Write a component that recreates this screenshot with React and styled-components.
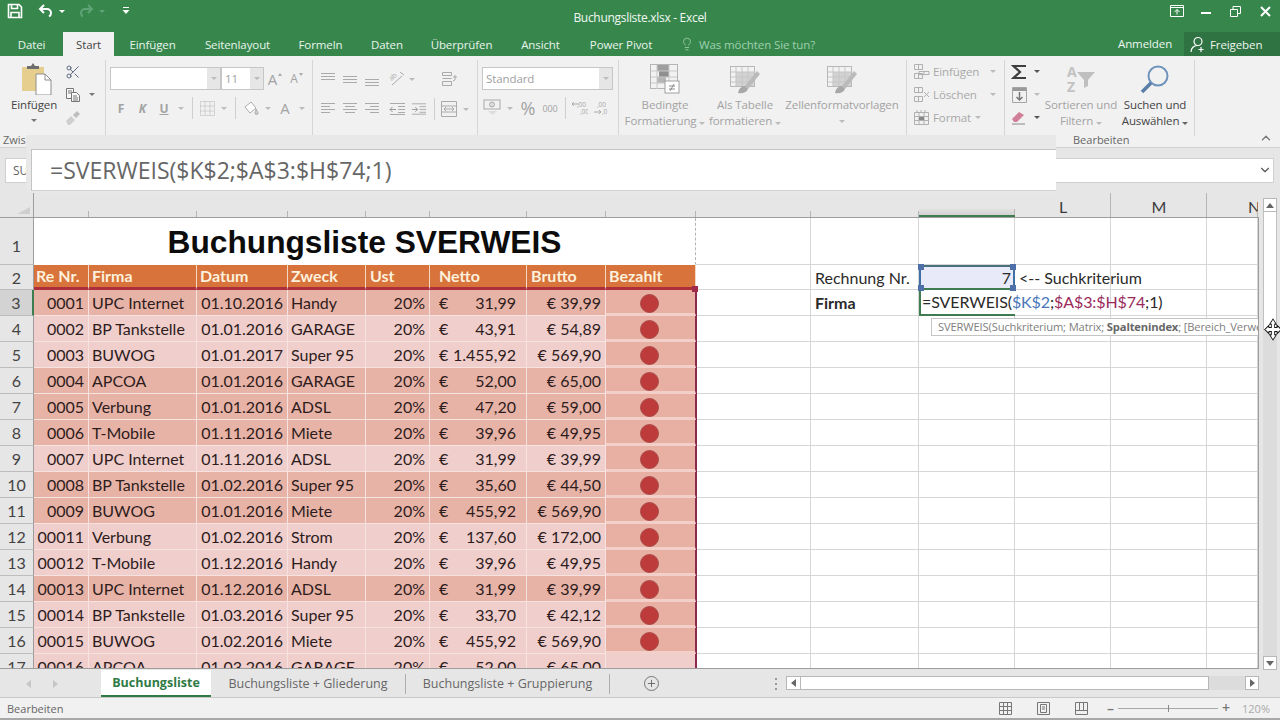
import React from "react";
import styled, { createGlobalStyle } from "styled-components";
import { Scissors, Lightbulb, ChevronDown, ChevronUp, Plus } from "lucide-react";

const Global = createGlobalStyle`
  html, body { margin: 0; padding: 0; width: 1280px; height: 720px; overflow: hidden; background: #e6e6e6; }
  * { box-sizing: border-box; }
  #root { width: 1280px; height: 720px; }
`;

const UI = `"Open Sans", "Noto Sans", sans-serif`;
const GREEN = "#37874d";
const COLS = "34px 55px 108px 91px 78px 64px 97px 79px 90px 115px 108px 96px 96px 96px 51px";

const Page = styled.div`position: relative; width: 1280px; height: 720px; overflow: hidden; display: flex; flex-direction: column; font-family: ${UI}; font-size: 12px; color: #444;`;

const TitleBar = styled.div`height: 32px; flex: none; background: ${GREEN}; display: grid; grid-template-columns: 1fr auto 1fr; align-items: start; color: #fff;`;
const Quick = styled.div`display: flex; align-items: center; height: 22px; padding-left: 7px;`;
const QSlot = styled.div`width: ${p => p.$w}px; display: flex; align-items: center; justify-content: center; height: 22px;`;
const DocTitle = styled.div`font-size: 12px; line-height: 35px; letter-spacing: -0.3px; color: #f2f7f3;`;
const WinBtns = styled.div`display: flex; justify-content: flex-end; align-items: center; height: 22px;`;
const WinBtn = styled.div`width: 29.5px; height: 22px; display: flex; align-items: center; justify-content: center;`;

const TabBar = styled.div`height: 24px; flex: none; background: ${GREEN}; display: flex; color: #e9f3ec;`;
const RTab = styled.div`
  width: ${p => p.$w}px; height: 24px; display: flex; align-items: center; justify-content: center; font-size: 11.5px;
  letter-spacing: -0.1px;
  background: ${p => (p.$active ? "#f1f1f1" : "transparent")}; color: ${p => (p.$active ? "#444" : "#e9f3ec")};
`;
const Tell = styled.div`display: flex; align-items: center; gap: 5px; padding-left: 13px; color: #9fd0ad; font-size: 11.5px; letter-spacing: -0.1px; flex: 1;`;
const Login = styled.div`width: 66px; text-align: left; line-height: 24px; font-size: 11.5px; letter-spacing: -0.1px; color: #eef6f0;`;
const Share = styled.div`width: 96px; height: 24px; background: #2f7342; display: flex; align-items: center; gap: 4px; padding-left: 6px; font-size: 11.5px; letter-spacing: -0.1px; color: #eef6f0;`;

const Ribbon = styled.div`height: 92px; flex: none; background: #f1f1f1; display: flex; border-bottom: 1px solid #d2d2d2; color: #a3a3a3; font-size: 11.5px; letter-spacing: -0.1px;`;
const Group = styled.div`
  width: ${p => p.$w}px; height: 76px; margin-top: 4px; flex: none; border-right: 1px solid #d6d6d6; padding-left: ${p => p.$pl || 0}px;
  display: flex; flex-direction: ${p => (p.$row ? "row" : "column")}; position: relative;
`;
const GroupLabel = styled.div`position: absolute; top: 73px; left: ${p => p.$l}px; font-size: 11px; color: #666; letter-spacing: 0; white-space: nowrap; line-height: 14px;`;
const Collapse = styled.div`flex: 1; display: flex; justify-content: flex-end; align-items: flex-end; padding: 0 7px 2px 0; color: #777;`;
const ToolRow = styled.div`display: flex; align-items: center; height: ${p => p.$h || 24}px; margin-top: ${p => p.$mt || 0}px; padding-left: ${p => p.$pl || 0}px;`;
const Slot = styled.div`width: ${p => p.$w}px; height: 100%; flex: none; display: flex; align-items: center; justify-content: center; font-size: ${p => p.$fs || 12}px; font-weight: ${p => p.$b ? 700 : 400}; color: ${p => p.$c || "#a3a3a3"}; text-decoration: ${p => p.$u ? "underline" : "none"}; font-style: ${p => p.$i ? "italic" : "normal"};`;
const VSep = styled.div`width: 1px; height: 22px; background: #cfcfcf;`;
const Caret = styled.span`display: inline-block; width: 0; height: 0; border-left: 3px solid transparent; border-right: 3px solid transparent; border-top: 3px solid ${p => p.$c || "#bbb"}; margin-left: ${p => p.$ml || 0}px;`;
const SizeMark = styled.span`width: 0; height: 0; margin: -8px 0 0 1px; border-left: 2.5px solid transparent; border-right: 2.5px solid transparent; ${p => p.$up ? "border-bottom: 3px solid #aaa;" : "border-top: 3px solid #aaa;"}`;
const Combo = styled.div`width: ${p => p.$w}px; height: 23px; background: #fff; border: 1px solid #c6c6c6; display: flex; align-items: center; justify-content: space-between; color: #a0a0a0; font-size: 11.5px; padding-left: 3px; flex: none;`;
const ComboArrow = styled.div`width: 13px; height: 21px; background: #e6e6e6; display: flex; align-items: center; justify-content: center;`;
const BigBtn = styled.div`width: ${p => p.$w}px; flex: none; display: flex; flex-direction: column; align-items: center; color: ${p => p.$c || "#a3a3a3"}; line-height: 16px; text-align: center; white-space: nowrap;`;
const BigIcon = styled.div`height: 37px; display: flex; align-items: center; justify-content: center;`;
const SmallCol = styled.div`width: 30px; display: flex; flex-direction: column; align-items: flex-start;`;
const Gap = styled.div`width: ${p => p.$w}px; flex: none;`;
const CellCmd = styled.div`height: 23px; display: flex; align-items: center; gap: 3px; padding-left: 6px; white-space: nowrap; color: #a8a8a8;`;

const FormulaRow = styled.div`height: 42px; flex: none; background: #e6e6e6; display: flex; align-items: center; padding: 2px 6px 0 5px; gap: 8px;`;
const NameBox = styled.div`width: 60px; height: 25px; background: #fff; border: 1px solid #d0d0d0; padding-left: 7px; line-height: 23px; color: #666;`;
const FormulaInput = styled.div`flex: 1; height: 25px; background: #fff; border: 1px solid #d0d0d0; display: flex; justify-content: flex-end; align-items: center; padding-right: 1px; color: #555;`;

const ZoomPanel = styled.div`position: absolute; left: 26px; top: 135px; width: 1030px; height: 58px; background: #e8e8e8; padding: 14px 0 2px 5px; z-index: 8;`;
const ZoomBox = styled.div`height: 42px; background: #fff; border-top: 1px solid #c4c4c4; border-left: 1px solid #c4c4c4; border-bottom: 1px solid #d0d0d0; padding-left: 18px; line-height: 40px; font-size: 23px; color: #666; white-space: nowrap; font-family: "Open Sans", sans-serif;`;

const Main = styled.div`height: 480px; flex: none; display: flex; background: #e6e6e6;`;
const Sheet = styled.div`width: 1259px; flex: none; display: flex; flex-direction: column;`;
const ColHeader = styled.div`height: 28px; flex: none; display: grid; grid-template-columns: ${COLS}; border-bottom: 1px solid #9d9d9d; background: #e6e6e6;`;
const Corner = styled.div`position: relative; border-right: 1px solid #9d9d9d;
  &::after { content: ""; position: absolute; right: 3px; bottom: 3px; width: 0; height: 0; border-left: 13px solid transparent; border-bottom: 7px solid #cfcfcf; }`;
const ColCell = styled.div`
  position: relative; font-family: Lato, sans-serif; font-size: 16px; color: #3c3c3c; text-align: ${p => p.$clip ? "left" : "center"}; line-height: 34px; overflow: hidden;
  padding-left: ${p => p.$clip ? 41 : 0}px;
  background: ${p => p.$sel ? "linear-gradient(#e6e6e6 70%, #d2d2d2)" : "none"};
  border-bottom: ${p => p.$sel ? "2px solid #3f7c50" : "none"};
  &::after { content: ""; position: absolute; right: 0; bottom: 0; width: 1px; height: ${p => p.$tall ? 24 : 6}px; background: #b5b5b5; }
`;
const Grid = styled.div`height: 451px; overflow: hidden; background: #fff; border-bottom: 1px solid #9d9d9d; border-right: 1px solid #9d9d9d; display: flex; flex-direction: column;`;
const Row = styled.div`display: grid; grid-template-columns: ${COLS}; height: ${p => p.$h}px; flex: none; font-family: Lato, sans-serif; font-size: 16px; color: #2e1c1c;`;
const RowNum = styled.div`
  background: ${p => p.$sel ? "#d3d3d3" : "#e6e6e6"}; border-right: ${p => p.$sel ? "2px solid #3f7c50" : "1px solid #9d9d9d"}; border-bottom: 1px solid #bdbdbd;
  display: flex; align-items: center; justify-content: center; padding-top: ${p => p.$low ? 8 : 0}px; color: #444;
`;
const Blank = styled.div`border-right: 1px solid #d6d6d6; border-bottom: 1px solid #d6d6d6; white-space: nowrap; display: flex; align-items: center; padding-left: 4px; font-weight: ${p => p.$b ? 700 : 400}; color: #2a2a2a; min-width: 0;`;
const TitleCell = styled.div`grid-column: span 8; border-right: 1px dashed #b4b4b4; border-bottom: 1px solid #fff; display: flex; align-items: center; justify-content: center; font-family: "Liberation Sans", Arial, sans-serif; font-weight: 700; font-size: 31.7px; color: #0c0c0c; padding-top: 3px;`;
const HeadCell = styled.div`background: #d8743b; border-right: 1px solid #f2d9c4; border-bottom: 3px solid #ae2f3c; color: #fdf0dc; font-weight: 700; display: flex; align-items: center; padding: 0 0 1px ${p => p.$pl}px; position: relative;`;
const Data = styled.div`
  background: ${p => p.$dark ? "#e7b3a7" : "#efcecc"}; border-right: 1px solid #f6e2df; border-bottom: 1px solid #f6e2df;
  display: flex; align-items: center; white-space: nowrap;
  justify-content: ${p => p.$align || "flex-start"}; padding: 0 ${p => p.$pr ?? 4}px 0 ${p => p.$pl ?? 3}px;
`;
const PaidCell = styled.div`position: relative; background: ${p => p.$dark ? "#e8b0a2" : "#efcecc"}; border-bottom: ${p => p.$dark ? "3px solid #f3cfc9" : "none"}; border-right: 1px solid #8a2a4c; box-shadow: 1px 0 0 #8a2a4c; display: flex; align-items: center; justify-content: center; padding-right: 2px;`;
const Dot = styled.div`width: 19px; height: 19px; border-radius: 50%; background: #bd3b3b; border: 1px solid #ab4a48; margin-top: 3px;`;
const Handle = styled.div`position: absolute; width: 6px; height: 6px; background: ${p => p.$c}; z-index: 4; ${p => p.$pos}`;
const CritCell = styled.div`position: relative; background: #e9eaf9; border: 2px solid #3f6fa5; border-top-color: #47707a; border-bottom-color: #3f7c50; text-align: right; padding-right: 2px; line-height: 21px; color: #2a2a2a;`;
const FormulaCell = styled.div`position: relative; z-index: 3; border-left: 2px solid #3f7c50; border-bottom: 2px solid #3f7c50; white-space: nowrap; padding-left: 1px; line-height: 24px; color: #2a2a2a; letter-spacing: -0.1px;`;
const Ref = styled.span`color: ${p => p.$c};`;
const Tip = styled.div`position: absolute; left: 10px; top: 28px; width: 331px; height: 18px; background: #fff; border: 1px solid #c4c4c4; font-family: ${UI}; font-size: 11.2px; letter-spacing: -0.15px; color: #808080; line-height: 16px; padding-left: 6px; white-space: nowrap; overflow: hidden;
  b { color: #666; font-weight: 700; }`;
const Cursor = styled.svg`position: absolute; left: 1264px; top: 318px; z-index: 9;`;

const VScroll = styled.div`flex: 1; display: flex; flex-direction: column; padding: 8px 3px 0 4px; height: 480px;`;
const SBtn = styled.div`width: ${p => p.$w || 14}px; height: 14px; flex: none; background: #fff; border: 1px solid #b8b8b8; display: flex; align-items: center; justify-content: center;`;
const VThumb = styled.div`height: 118px; flex: none; background: #fff; border: 1px solid #c0c0c0; border-top: none;`;
const VTrack = styled.div`flex: 1; background: #dcdcdc;`;
const Arrow = styled.span`display: inline-block; width: 0; height: 0; opacity: ${p => p.$dim ? 0.25 : 1};
  ${p => p.$d === "up" && "border-left:4px solid transparent;border-right:4px solid transparent;border-bottom:5px solid #666;"}
  ${p => p.$d === "down" && "border-left:4px solid transparent;border-right:4px solid transparent;border-top:5px solid #666;"}
  ${p => p.$d === "left" && "border-top:4px solid transparent;border-bottom:4px solid transparent;border-right:5px solid #666;"}
  ${p => p.$d === "right" && "border-top:4px solid transparent;border-bottom:4px solid transparent;border-left:5px solid #666;"}
`;

const SheetTabs = styled.div`height: 27px; flex: none; background: #e6e6e6; display: flex; align-items: center; position: relative;`;
const TabNav = styled.div`width: 101px; height: 100%; display: flex; align-items: center; padding-left: 26px; gap: 22px;`;
const STab = styled.div`
  width: ${p => p.$w}px; display: flex; align-items: center; justify-content: center; flex: none; font-size: 12.5px;
  color: ${p => p.$active ? "#2f7a45" : "#666"}; font-weight: ${p => p.$active ? 700 : 400}; background: ${p => p.$active ? "#fff" : "transparent"};
  border-bottom: ${p => p.$active ? "2px solid #2f7a45" : "none"}; margin-top: ${p => p.$active ? -1 : 0}px;
  border-right: ${p => p.$sep ? "1px solid #aeaeae" : "none"}; height: ${p => p.$active ? 27 : 20}px;
`;
const AddTab = styled.div`width: 15px; height: 15px; border-radius: 50%; border: 1px solid #777; margin-left: 34px; display: flex; align-items: center; justify-content: center; color: #666;`;
const Dots = styled.div`width: 2px; height: 12px; margin-left: 116px; background: repeating-linear-gradient(#999 0 2px, transparent 2px 5px);`;
const HScroll = styled.div`margin-left: 9px; width: 473px; height: 15px; display: flex;`;
const HThumb = styled.div`width: 408px; height: 14px; background: #fff; border: 1px solid #b8b8b8; border-left: none;`;
const HTrack = styled.div`flex: 1; height: 14px; background: #dcdcdc;`;

const Status = styled.div`flex: 1; background: #f1f1f1; border-top: 1px solid #c8c8c8; border-bottom: 2px solid #a8a8a8; display: flex; align-items: center; justify-content: space-between; padding: 0 10px 0 7px; font-size: 11px; color: #666;`;
const StatusRight = styled.div`display: flex; align-items: center;`;
const ViewBtn = styled.div`width: 38px; display: flex; justify-content: center; align-items: center;`;
const ZoomSlider = styled.div`width: 100px; height: 1px; background: #a8a8a8; margin: 0 4px; position: relative;
  &::after { content: ""; position: absolute; left: 50px; top: -3px; width: 1px; height: 7px; background: #888; }`;
const ZoomPct = styled.div`margin-left: 12px; color: #aaa;`;
const SignBtn = styled.div`color: #777; font-size: 14px; line-height: 14px; font-weight: 600; margin-left: ${p => p.$ml || 0}px;`;

/* drawings */
const SaveIcon = () => (
  <svg width="16" height="16" viewBox="0 0 16 16" fill="none" stroke="#fff" strokeWidth="1.6">
    <path d="M1.500 1.500h10.500l2.500 2.500v10.500h-13z" /><path d="M4.500 1.500v4h6v-4M4 14.500v-5h8v5" />
  </svg>
);
const UndoIcon = () => (
  <svg width="16" height="14" viewBox="0 0 16 14" fill="none" stroke="#fff" strokeWidth="2">
    <path d="M6 1L2 5l4 4" /><path d="M2 5h7a4 4 0 0 1 4 4 4 4 0 0 1-2 3.500" />
  </svg>
);
const RedoIcon = () => (
  <svg width="16" height="14" viewBox="0 0 16 14" fill="none" stroke="#5ea476" strokeWidth="2">
    <path d="M10 1l4 4-4 4" /><path d="M14 5H7a4 4 0 0 0-4 4 4 4 0 0 0 2 3.500" />
  </svg>
);
const QatMore = () => (
  <svg width="8" height="8" viewBox="0 0 8 8" fill="#fff"><rect x="1" y="0" width="6" height="1" /><path d="M.5 3h7L4 7z" /></svg>
);
const Paste = () => (
  <svg width="30" height="32" viewBox="0 0 30 32" style={{ marginLeft: 5 }}>
    <rect x="0" y="4" width="22" height="24" fill="#e6cf8e" />
    <path d="M5 6V3h4l2-3 2 3h4v3z" fill="#6d6d6d" />
    <path d="M14 11h9l6 6v15H14z" fill="#fff" stroke="#8e8e8e" />
    <path d="M23 11v6h6" fill="none" stroke="#8e8e8e" />
  </svg>
);
const CopyIcon = () => (
  <svg width="16" height="16" viewBox="0 0 16 16" fill="#f8f8f8" stroke="#777">
    <path d="M1.500 1.500h7v10h-7z" /><path d="M6.500 5.500h5l3 3v6h-8z" /><path d="M3 4h4M3 6h3M8 9h4M8 11h5M8 13h5" fill="none" />
  </svg>
);
const Brush = () => (
  <svg width="16" height="15" viewBox="0 0 16 15">
    <path d="M1 11l5-5 4 4-5 5H3z" fill="#cfcfcf" /><path d="M8 5l4-4 3 3-4 4z" fill="#bdbdbd" />
  </svg>
);
const Lines = ({ rows }) => (
  <svg width="17" height="14" viewBox="0 0 17 14" stroke="#aaa" strokeWidth="1">
    {rows.map(([x1, x2, y], i) => <line key={i} x1={x1} x2={x2} y1={y + 0.5} y2={y + 0.5} />)}
  </svg>
);
const Indent = ({ dir }) => (
  <svg width="17" height="14" viewBox="0 0 17 14" stroke="#aaa" fill="none">
    <path d="M1 1.500h15M9 4.500h7M9 7.500h7M9 10.500h7M1 12.500h15" />
    {dir === "out" ? <path d="M7 7.500H1m2.500-2.500L1 7.500 3.500 10" stroke="#999" /> : <path d="M1 7.500h6M4.500 5L7 7.500 4.500 10" stroke="#999" />}
  </svg>
);
const Angle = () => (
  <svg width="18" height="16" viewBox="0 0 18 16" fill="none" stroke="#aaa"><path d="M5 14l10-9M13 1l4 3" /><text x="2" y="8" fontSize="7" fill="#aaa" stroke="none" transform="rotate(-40 6 6)" fontFamily="Open Sans">ab</text></svg>
);
const Wrap = () => (
  <svg width="17" height="17" viewBox="0 0 17 17" fill="none" stroke="#aaa"><path d="M1.500 1.500h9v3h-9zM1.500 7.500h9M1.500 10.500h9v4h-9zM12 6h4M14 4v5l-2 1" /></svg>
);
const Merge = () => (
  <svg width="16" height="16" viewBox="0 0 16 16" fill="none" stroke="#aaa"><path d="M.5.500h15v15H.5zM.5 5h15M.5 11h15M3 8h10M3 8l2-2M3 8l2 2M13 8l-2-2M13 8l-2 2" /></svg>
);
const Borders = () => (
  <svg width="15" height="15" viewBox="0 0 15 15" fill="none" stroke="#b5b5b5" strokeDasharray="1 1"><path d="M.5.500h14v14H.5zM5 .5v14M10 .5v14M.5 5h14M.5 10h14" /></svg>
);
const Fill = () => (
  <svg width="18" height="16" viewBox="0 0 18 16" fill="#fff" stroke="#aaa"><path d="M3 7l6-5 5 6-6 5z" /><path d="M14 9c1 2 2 3 2 4a1 1 0 0 1-3 0c0-1 1-2 1-4z" fill="#ccc" /></svg>
);
const Money = () => (
  <svg width="18" height="18" viewBox="0 0 18 18" fill="none" stroke="#aaa"><rect x="1" y="1" width="16" height="9" /><circle cx="9" cy="5.500" r="2.500" fill="#ddd" /><path d="M5 12h9l-4.500 4z" fill="#ddd" stroke="none" /></svg>
);
const Dec = ({ flip }) => (
  <svg width="18" height="16" viewBox="0 0 18 16" fill="none" stroke="#aaa">
    <path d={flip ? "M2 12h7M7 10l2 2-2 2" : "M9 4H2m2-2L2 4l2 2"} />
    <text x={flip ? 5 : 7} y="7" fontSize="6.500" fill="#aaa" stroke="none" fontFamily="Open Sans">,00</text>
    <text x="10" y="14" fontSize="6.500" fill="#aaa" stroke="none" fontFamily="Open Sans">{flip ? ",0" : ",00"}</text>
  </svg>
);
const CondFmt = () => (
  <svg width="30" height="30" viewBox="0 0 30 30">
    <rect x=".5" y=".5" width="27" height="24" fill="#f2f2f2" stroke="#b5b5b5" />
    <rect x="7" y="1" width="12" height="6" fill="#9e9e9e" /><rect x="9" y="7" width="10" height="6" fill="#8f8f8f" /><rect x="7" y="13" width="9" height="6" fill="#b5b5b5" />
    <path d="M7 1v24M19 1v24M1 7h26M1 13h26M1 19h26" stroke="#c8c8c8" fill="none" />
    <rect x="15" y="17" width="14" height="12" fill="#fff" stroke="#a0a0a0" />
    <path d="M19 22h6M19 25h6M24 20l-4 7" stroke="#8a8a8a" fill="none" />
  </svg>
);
const TableFmt = () => (
  <svg width="30" height="30" viewBox="0 0 30 30">
    <rect x=".5" y="2.500" width="24" height="20" fill="#f2f2f2" stroke="#b8b8b8" />
    <rect x="6" y="8" width="18" height="14" fill="#d2d2d2" />
    <path d="M6 3v19M12 3v19M18 3v19M1 8h24M1 13h24M1 18h24" stroke="#c6c6c6" fill="none" />
    <path d="M15 22l12-15 3 3-12 15z" fill="#bababa" /><path d="M8 29c1-5 4-7 7-7l3 3c-1 3-5 5-10 4z" fill="#a8a8a8" />
  </svg>
);
const CellIns = ({ kind }) => (
  <svg width="17" height="17" viewBox="0 0 17 17" fill="none" stroke="#b0b0b0">
    <path d="M1.500 1.500h8v5h-8zM1.500 10.500h8v5h-8zM5.500 1.500v5M5.500 10.500v5" />
    {kind === "ins" && <path d="M6 8.500h10v3H6zM11 8.500v3" />}
    {kind === "del" && <path d="M11 6l5 5M16 6l-5 5" />}
  </svg>
);
const CellFmt = () => (
  <svg width="17" height="17" viewBox="0 0 17 17" fill="none" stroke="#b0b0b0">
    <path d="M1.500 3.500h14v12h-14zM1.500 7.500h14M1.500 11.500h14M6 3.500v12M11 3.500v12M4 1v3M8 1v3M12 1v3" /><rect x="6" y="8" width="5" height="3" fill="#888" stroke="none" />
  </svg>
);
const Sigma = () => (
  <svg width="16" height="16" viewBox="0 0 16 16" fill="none" stroke="#3f3f3f" strokeWidth="2.200"><path d="M15 2H2.500L9 8l-6.500 6H15" /></svg>
);
const FillDown = () => (
  <svg width="15" height="16" viewBox="0 0 15 16" fill="none" stroke="#a5a5a5"><path d="M.5.500h14v15H.5z" /><rect x="1" y="1" width="13" height="3" fill="#999" stroke="none" /><path d="M7.500 5v8M4.500 10l3 3 3-3" stroke="#777" strokeWidth="1.500" /></svg>
);
const Eraser = () => (
  <svg width="16" height="15" viewBox="0 0 16 15"><path d="M1 9l7-7 5 3-7 7H3z" fill="#cf7f98" /><path d="M1 14h13" stroke="#888" /></svg>
);
const SortIcon = () => (
  <svg width="30" height="30" viewBox="0 0 30 30">
    <text x="1" y="13" fontSize="14" fontWeight="700" fill="#c2c2c2" fontFamily="Open Sans">A</text>
    <text x="1" y="28" fontSize="14" fontWeight="700" fill="#c2c2c2" fontFamily="Open Sans">Z</text>
    <path d="M11 8h18l-7 8v6l-4 2v-8z" fill="#bfbfbf" />
  </svg>
);
const SearchBig = () => (
  <svg width="30" height="30" viewBox="0 0 30 30" fill="none">
    <circle cx="18" cy="12" r="9.500" stroke="#6f93bb" strokeWidth="2" />
    <path d="M11 19L2 28" stroke="#5b7ea8" strokeWidth="3.500" />
  </svg>
);
const ShareIcon = () => (
  <svg width="16" height="17" viewBox="0 0 16 17" fill="none" stroke="#fff" strokeWidth="1.200">
    <circle cx="8" cy="5.500" r="4" /><path d="M1 16c0-4 3-6.500 6-6.500M11 11v5M8.500 13.500h5" />
  </svg>
);
const RestoreRibbon = () => (
  <svg width="14" height="12" viewBox="0 0 14 12" fill="none" stroke="#fff"><path d="M.5.500h13v11H.5zM.5 2.500h13" /><path d="M7 9.500V4.500M4.500 7L7 4.500 9.500 7" /></svg>
);
const GridView = () => (
  <svg width="13" height="13" viewBox="0 0 13 13" fill="none" stroke="#777"><path d="M.5.500h12v12H.5zM4.500.500v12M8.500.500v12M.5 4.500h12M.5 8.500h12" /></svg>
);
const PageView = () => (
  <svg width="13" height="13" viewBox="0 0 13 13" fill="none" stroke="#777"><path d="M.5.500h12v12H.5zM3.500 2.500h6v8h-6zM5 5h3M5 7h3" /></svg>
);
const BreakView = () => (
  <svg width="13" height="13" viewBox="0 0 13 13" fill="none" stroke="#777"><path d="M.5.500h12v12H.5zM.5 8.500h12M4.500.500v8M8.500.500v8" /></svg>
);
const MoveCursor = () => (
  <Cursor width="18" height="23" viewBox="0 0 22 22" preserveAspectRatio="none">
    <path d="M11 1l4 5h-2v3h3V7l5 4-5 4v-2h-3v3h2l-4 5-4-5h2v-3H6v2l-5-4 5-4v2h3V6H7z" fill="#fff" stroke="#111" strokeWidth="1" />
  </Cursor>
);

const DATA = [
  ["0001", "UPC Internet", "01.10.2016", "Handy", "31,99", "€ 39,99", 1],
  ["0002", "BP Tankstelle", "01.01.2016", "GARAGE", "43,91", "€ 54,89", 0],
  ["0003", "BUWOG", "01.01.2017", "Super 95", "1.455,92", "€ 569,90", 0],
  ["0004", "APCOA", "01.01.2016", "GARAGE", "52,00", "€ 65,00", 1],
  ["0005", "Verbung", "01.01.2016", "ADSL", "47,20", "€ 59,00", 1],
  ["0006", "T-Mobile", "01.11.2016", "Miete", "39,96", "€ 49,95", 1],
  ["0007", "UPC Internet", "01.11.2016", "ADSL", "31,99", "€ 39,99", 0],
  ["0008", "BP Tankstelle", "01.02.2016", "Super 95", "35,60", "€ 44,50", 1],
  ["0009", "BUWOG", "01.01.2016", "Miete", "455,92", "€ 569,90", 1],
  ["00011", "Verbung", "01.02.2016", "Strom", "137,60", "€ 172,00", 0],
  ["00012", "T-Mobile", "01.12.2016", "Handy", "39,96", "€ 49,95", 0],
  ["00013", "UPC Internet", "01.12.2016", "ADSL", "31,99", "€ 39,99", 1],
  ["00014", "BP Tankstelle", "01.03.2016", "Super 95", "33,70", "€ 42,12", 0],
  ["00015", "BUWOG", "01.02.2016", "Miete", "455,92", "€ 569,90", 0],
  ["00016", "APCOA", "01.03.2016", "GARAGE", "52,00", "€ 65,00", 0],
];

const HEADERS = [["Re Nr.", 2], ["Firma", 3], ["Datum", 3], ["Zweck", 3], ["Ust", 4], ["Netto", 9], ["Brutto", 4], ["Bezahlt", 3]];

const BlankCells = ({ n }) => Array.from({ length: n }, (_, i) => <Blank key={i} />);

export default function App() {
  return (
    <Page>
      <Global />
      <TitleBar>
        <Quick>
          <QSlot $w={16}><SaveIcon /></QSlot>
          <QSlot $w={14} />
          <QSlot $w={18}><UndoIcon /></QSlot>
          <QSlot $w={14}><Caret $c="#fff" /></QSlot>
          <QSlot $w={8} />
          <QSlot $w={18}><RedoIcon /></QSlot>
          <QSlot $w={14}><Caret $c="#5ea476" /></QSlot>
          <QSlot $w={12} />
          <QSlot $w={10}><QatMore /></QSlot>
        </Quick>
        <DocTitle>Buchungsliste.xlsx - Excel</DocTitle>
        <WinBtns>
          <WinBtn><RestoreRibbon /></WinBtn>
          <WinBtn><svg width="10" height="10" viewBox="0 0 10 10"><rect x="0" y="6" width="10" height="2" fill="#fff" /></svg></WinBtn>
          <WinBtn><svg width="11" height="11" viewBox="0 0 11 11" fill="none" stroke="#fff"><path d="M.5 3.500h7v7h-7zM3 3.500v-3h7.500v7h-3" /></svg></WinBtn>
          <WinBtn><svg width="11" height="11" viewBox="0 0 11 11" stroke="#fff" strokeWidth="2"><path d="M1 1l9 9M10 1l-9 9" /></svg></WinBtn>
        </WinBtns>
      </TitleBar>

      <TabBar>
        <RTab $w={63}>Datei</RTab>
        <RTab $w={51} $active>Start</RTab>
        <RTab $w={77}>Einfügen</RTab>
        <RTab $w={93}>Seitenlayout</RTab>
        <RTab $w={73}>Formeln</RTab>
        <RTab $w={60}>Daten</RTab>
        <RTab $w={89}>Überprüfen</RTab>
        <RTab $w={69}>Ansicht</RTab>
        <RTab $w={92}>Power Pivot</RTab>
        <Tell><Lightbulb size={14} strokeWidth={1.4} />Was möchten Sie tun?</Tell>
        <Login>Anmelden</Login>
        <Share><ShareIcon />Freigeben</Share>
      </TabBar>

      <Ribbon>
        <Group $w={106} $pl={3} $row>
          <BigBtn $w={62} $c="#444">
            <BigIcon><Paste /></BigIcon>
            <span>Einfügen</span>
            <ToolRow $h={14}><Caret $c="#777" /></ToolRow>
          </BigBtn>
          <SmallCol>
            <ToolRow $h={23}><Scissors size={16} color="#55617a" strokeWidth={1.4} /></ToolRow>
            <ToolRow $h={23}><CopyIcon /><Caret $c="#777" $ml={8} /></ToolRow>
            <ToolRow $h={23}><Brush /></ToolRow>
          </SmallCol>
          <GroupLabel $l={3}>Zwischenablage</GroupLabel>
        </Group>

        <Group $w={207}>
          <ToolRow $h={23} $mt={7} $pl={4}>
            <Combo $w={111}><span /><ComboArrow><Caret /></ComboArrow></Combo>
            <Combo $w={43}>11<ComboArrow><Caret /></ComboArrow></Combo>
            <Slot $w={22} $fs={15}>A<SizeMark $up /></Slot>
            <Slot $w={21} $fs={12}>A<SizeMark /></Slot>
          </ToolRow>
          <ToolRow $h={24} $mt={6} $pl={4}>
            <Slot $w={22} $b>F</Slot>
            <Slot $w={21} $b $i>K</Slot>
            <Slot $w={22} $b $u>U</Slot>
            <Slot $w={12}><Caret /></Slot>
            <Slot $w={10}><VSep /></Slot>
            <Slot $w={20}><Borders /></Slot>
            <Slot $w={14}><Caret /></Slot>
            <Slot $w={8}><VSep /></Slot>
            <Slot $w={23}><Fill /></Slot>
            <Slot $w={12}><Caret /></Slot>
            <Slot $w={22} $fs={15}>A</Slot>
            <Slot $w={12}><Caret /></Slot>
          </ToolRow>
        </Group>

        <Group $w={165}>
          <ToolRow $h={24} $mt={7} $pl={4}>
            <Slot $w={22}><Lines rows={[[1, 15, 1], [1, 15, 4], [1, 15, 7]]} /></Slot>
            <Slot $w={22}><Lines rows={[[1, 15, 4], [1, 15, 7], [1, 15, 10]]} /></Slot>
            <Slot $w={22}><Lines rows={[[1, 15, 7], [1, 15, 10], [1, 15, 13]]} /></Slot>
            <Slot $w={26}><Angle /></Slot>
            <Slot $w={6}><Caret /></Slot>
            <Slot $w={22} />
            <Slot $w={24}><Wrap /></Slot>
          </ToolRow>
          <ToolRow $h={24} $mt={6} $pl={4}>
            <Slot $w={22}><Lines rows={[[1, 15, 1], [1, 10, 4], [1, 15, 7], [1, 10, 10]]} /></Slot>
            <Slot $w={22}><Lines rows={[[1, 15, 1], [3, 13, 4], [1, 15, 7], [3, 13, 10]]} /></Slot>
            <Slot $w={22}><Lines rows={[[1, 15, 1], [6, 15, 4], [1, 15, 7], [6, 15, 10]]} /></Slot>
            <Slot $w={28}><Indent dir="out" /></Slot>
            <Slot $w={16}><Indent dir="in" /></Slot>
            <Slot $w={14}><VSep /></Slot>
            <Slot $w={16}><Merge /></Slot>
            <Slot $w={18}><Caret /></Slot>
          </ToolRow>
        </Group>

        <Group $w={141}>
          <ToolRow $h={23} $mt={7} $pl={4}>
            <Combo $w={131}>Standard<ComboArrow><Caret /></ComboArrow></Combo>
          </ToolRow>
          <ToolRow $h={24} $mt={6} $pl={4}>
            <Slot $w={20}><Money /></Slot>
            <Slot $w={16}><Caret /></Slot>
            <Slot $w={20} $fs={18}>%</Slot>
            <Slot $w={24} $fs={9}>000</Slot>
            <Slot $w={6}><VSep /></Slot>
            <Slot $w={22}><Dec /></Slot>
            <Slot $w={22}><Dec flip /></Slot>
          </ToolRow>
        </Group>

        <Group $w={288} $row>
          <BigBtn $w={92}>
            <BigIcon><CondFmt /></BigIcon>
            <span>Bedingte</span>
            <span>Formatierung <Caret /></span>
          </BigBtn>
          <BigBtn $w={68}>
            <BigIcon><TableFmt /></BigIcon>
            <span>Als Tabelle</span>
            <span>formatieren <Caret /></span>
          </BigBtn>
          <BigBtn $w={126}>
            <BigIcon><TableFmt /></BigIcon>
            <span>Zellenformatvorlagen</span>
            <ToolRow $h={16}><Caret /></ToolRow>
          </BigBtn>
        </Group>

        <Group $w={98}>
          <CellCmd><CellIns kind="ins" />Einfügen<Caret $ml={8} /></CellCmd>
          <CellCmd><CellIns kind="del" />Löschen<Caret $ml={10} /></CellCmd>
          <CellCmd><CellFmt />Format<Caret $ml={1} /></CellCmd>
        </Group>

        <Group $w={190} $row>
          <SmallCol>
            <ToolRow $h={23} $pl={6}><Sigma /><Caret $c="#555" $ml={7} /></ToolRow>
            <ToolRow $h={23} $pl={7}><FillDown /><Caret $ml={7} /></ToolRow>
            <ToolRow $h={23} $pl={6}><Eraser /><Caret $c="#555" $ml={7} /></ToolRow>
          </SmallCol>
          <Gap $w={10} />
          <BigBtn $w={72}>
            <BigIcon><SortIcon /></BigIcon>
            <span>Sortieren und</span>
            <span>Filtern <Caret /></span>
          </BigBtn>
          <BigBtn $w={76} $c="#444">
            <BigIcon><SearchBig /></BigIcon>
            <span>Suchen und</span>
            <span>Auswählen <Caret $c="#666" /></span>
          </BigBtn>
          <GroupLabel $l={68}>Bearbeiten</GroupLabel>
        </Group>
        <Collapse><ChevronUp size={14} strokeWidth={2.2} /></Collapse>
      </Ribbon>

      <FormulaRow>
        <NameBox>SU</NameBox>
        <FormulaInput><ChevronDown size={14} strokeWidth={2} /></FormulaInput>
      </FormulaRow>

      <ZoomPanel>
        <ZoomBox>=SVERWEIS($K$2;$A$3:$H$74;1)</ZoomBox>
      </ZoomPanel>

      <Main>
        <Sheet>
          <ColHeader>
            <Corner />
            {Array.from({ length: 10 }, (_, i) => <ColCell key={i} />)}
            <ColCell $sel />
            <ColCell $tall>L</ColCell>
            <ColCell $tall>M</ColCell>
            <ColCell $clip>N</ColCell>
          </ColHeader>
          <Grid>
            <Row $h={47}>
              <RowNum $low>1</RowNum>
              <TitleCell>Buchungsliste SVERWEIS</TitleCell>
              <BlankCells n={6} />
            </Row>
            <Row $h={25}>
              <RowNum>2</RowNum>
              {HEADERS.map(([h, pl]) => <HeadCell key={h} $pl={pl}>{h}</HeadCell>)}
              <Blank />
              <Blank>Rechnung Nr.</Blank>
              <CritCell>
                7
                <Handle $c="#4f6fa8" $pos="left:-3px;top:-3px;" />
                <Handle $c="#4f6fa8" $pos="right:-3px;top:-3px;" />
                <Handle $c="#4f6fa8" $pos="left:-3px;bottom:-3px;" />
                <Handle $c="#4f6fa8" $pos="right:-3px;bottom:-3px;" />
              </CritCell>
              <Blank>{"<-- Suchkriterium"}</Blank>
              <BlankCells n={2} />
            </Row>
            {DATA.map((r, i) => (
              <Row key={r[0]} $h={26}>
                <RowNum $sel={i === 0}>{i + 3}</RowNum>
                <Data $dark={r[6]} $align="flex-end">{r[0]}</Data>
                <Data $dark={r[6]}>{r[1]}</Data>
                <Data $dark={r[6]} $align="flex-end">{r[2]}</Data>
                <Data $dark={r[6]}>{r[3]}</Data>
                <Data $dark={r[6]} $align="flex-end">20%</Data>
                <Data $dark={r[6]} $align="space-between" $pl={9} $pr={10}><span>€</span><span>{r[4]}</span></Data>
                <Data $dark={r[6]} $align="flex-end">{r[5]}</Data>
                <PaidCell $dark={i < 14}>
                  {i < 14 && <Dot />}
                  {i === 0 && <Handle $c="#a02a4a" $pos="right:-3px;top:-4px;" />}
                </PaidCell>
                <Blank />
                {i === 0 ? <Blank $b>Firma</Blank> : <Blank />}
                {i === 0 ? (
                  <FormulaCell>
                    =SVERWEIS(<Ref $c="#4a76b8">$K$2</Ref>;<Ref $c="#9a2a5a">$A$3:$H$74</Ref>;1)
                    <Tip>SVERWEIS(Suchkriterium; Matrix; <b>Spaltenindex</b>; [Bereich_Verweis])</Tip>
                  </FormulaCell>
                ) : <Blank />}
                <BlankCells n={3} />
              </Row>
            ))}
          </Grid>
        </Sheet>
        <VScroll>
          <SBtn><Arrow $d="up" /></SBtn>
          <VThumb />
          <VTrack />
          <SBtn><Arrow $d="down" /></SBtn>
        </VScroll>
      </Main>

      <SheetTabs>
        <TabNav><Arrow $d="left" $dim /><Arrow $d="right" $dim /></TabNav>
        <STab $w={110} $active>Buchungsliste</STab>
        <STab $w={195} $sep>Buchungsliste + Gliederung</STab>
        <STab $w={204} $sep>Buchungsliste + Gruppierung</STab>
        <AddTab><Plus size={11} strokeWidth={2} /></AddTab>
        <Dots />
        <HScroll>
          <SBtn $w={15}><Arrow $d="left" /></SBtn>
          <HThumb />
          <HTrack />
          <SBtn $w={14}><Arrow $d="right" /></SBtn>
        </HScroll>
      </SheetTabs>

      <Status>
        <span>Bearbeiten</span>
        <StatusRight>
          <ViewBtn><GridView /></ViewBtn>
          <ViewBtn><PageView /></ViewBtn>
          <ViewBtn><BreakView /></ViewBtn>
          <SignBtn $ml={7}>–</SignBtn>
          <ZoomSlider />
          <SignBtn>+</SignBtn>
          <ZoomPct>120%</ZoomPct>
        </StatusRight>
      </Status>
      <MoveCursor />
    </Page>
  );
}
